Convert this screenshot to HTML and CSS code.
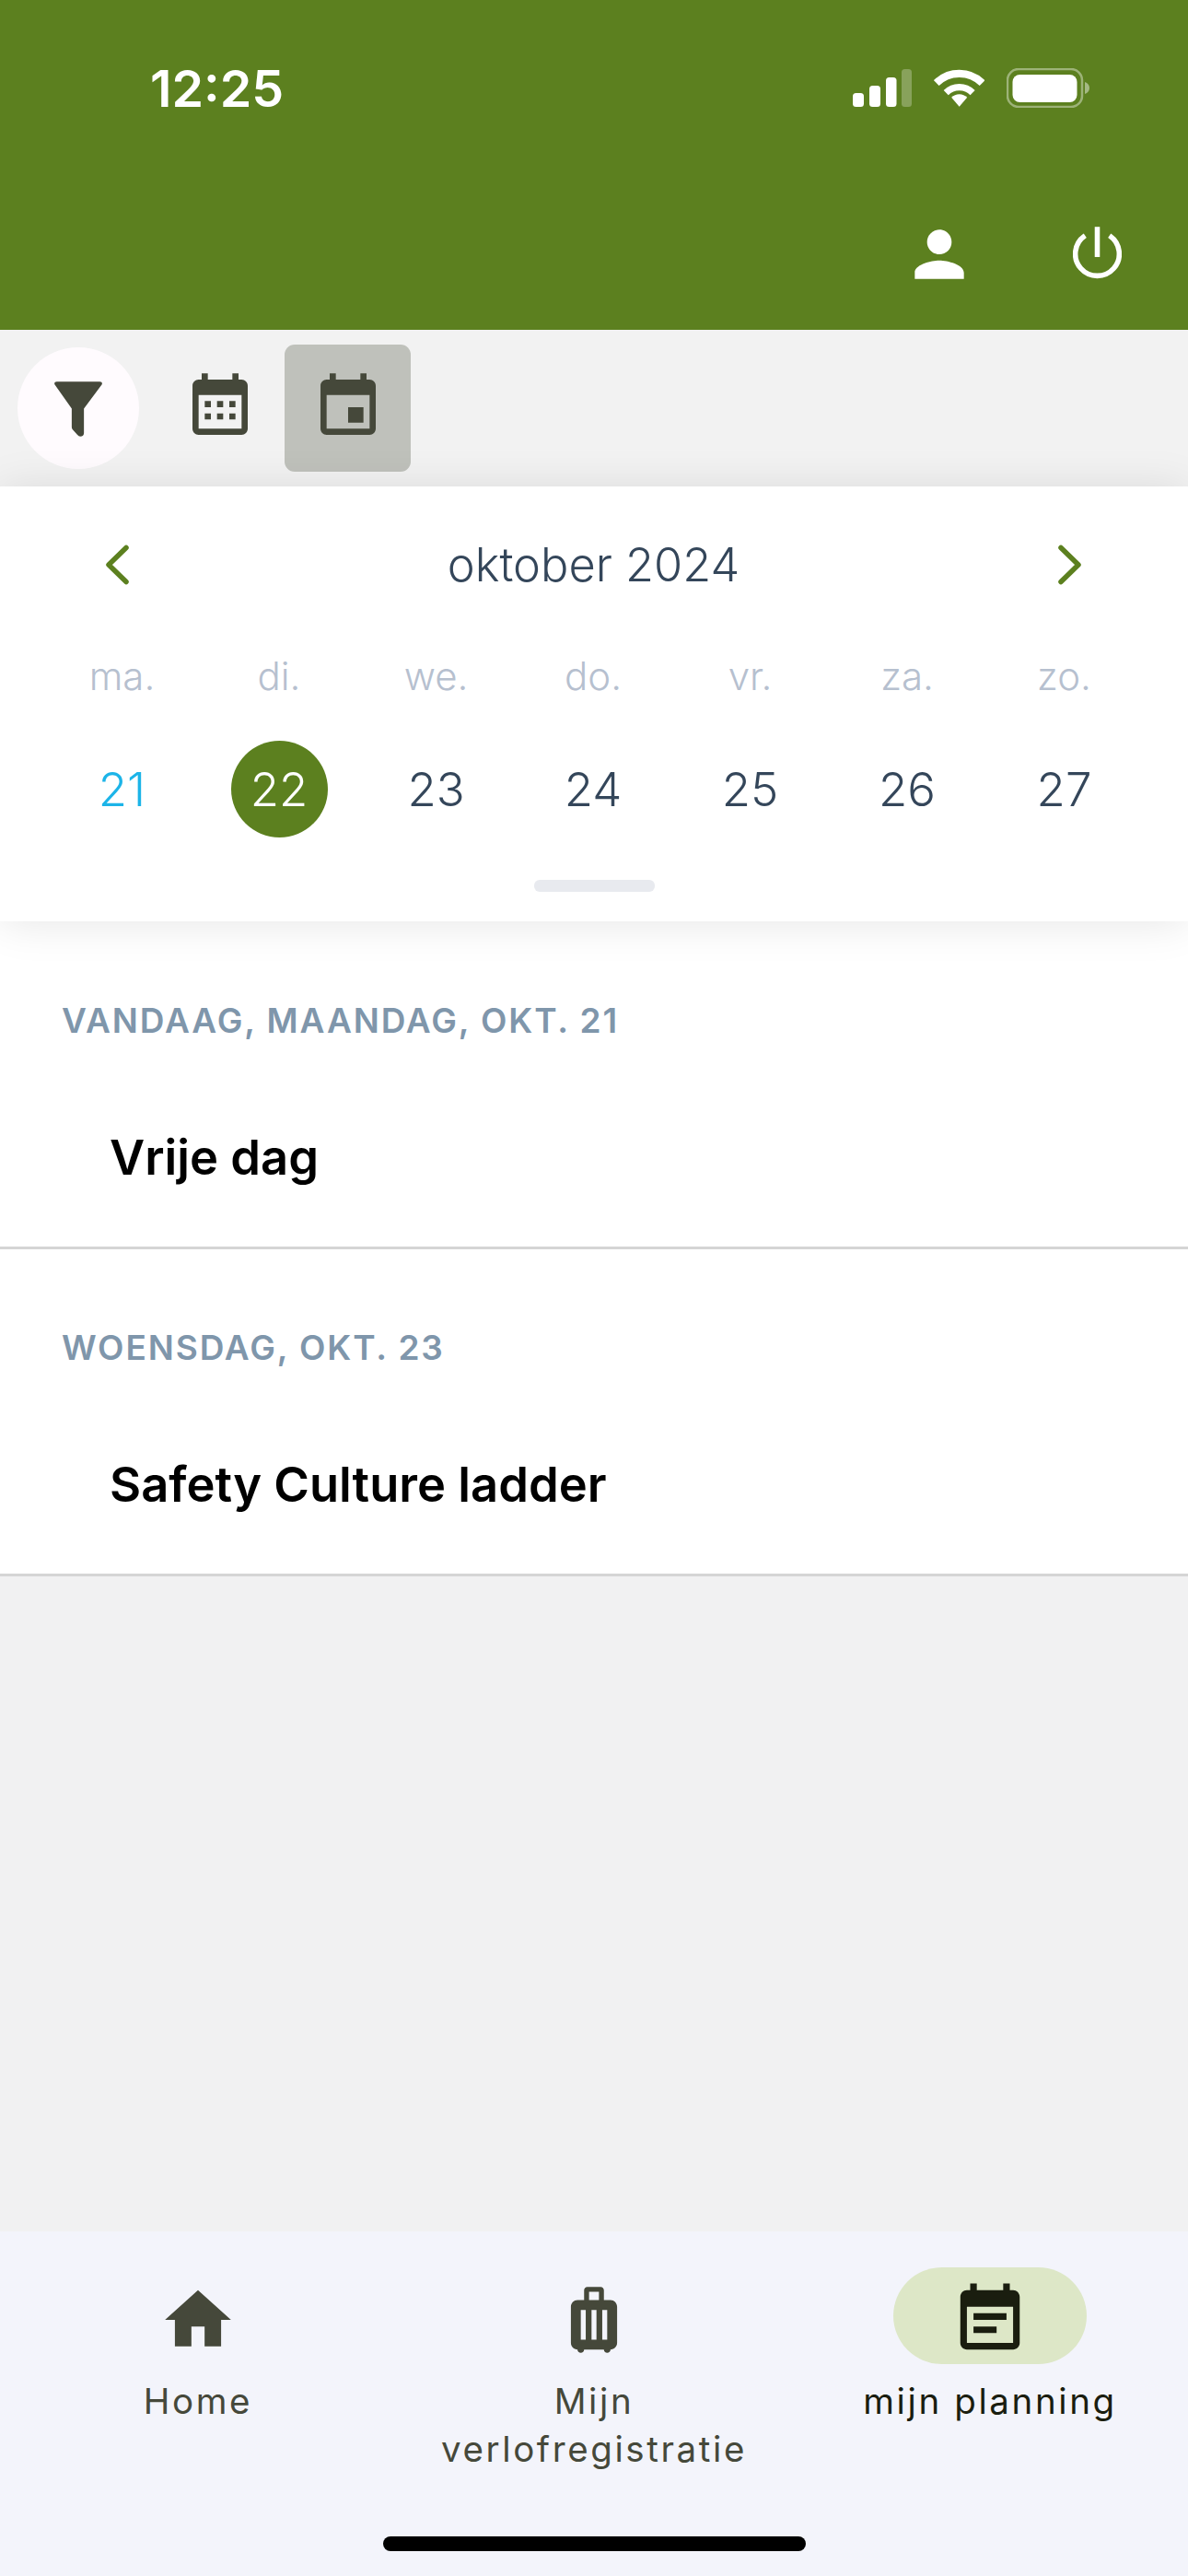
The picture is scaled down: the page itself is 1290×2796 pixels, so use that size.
FILE: index.html
```html
<!DOCTYPE html>
<html lang="nl">
<head>
<meta charset="utf-8">
<title>Mijn planning</title>
<link rel="stylesheet" href="styles.css">
</head>
<body>
<div class="app">
  <header class="header">
    <div class="status">
      <span class="time">12:25</span>
      <div class="status-icons">
        <svg class="signal" viewBox="0 0 64 41"><rect x="0" y="26" width="12" height="15" rx="3.5" fill="#fff"/><rect x="18" y="18" width="12" height="23" rx="3.5" fill="#fff"/><rect x="36" y="9" width="11.5" height="32" rx="3.5" fill="#fff"/><rect x="53" y="0" width="11" height="41" rx="3.5" fill="#fff" fill-opacity=".27"/></svg>
        <svg class="wifi" viewBox="0 0 165 125"><path d="M7 46A108 108 0 0 1 159 46" fill="none" stroke="#fff" stroke-width="25"/><path d="M39 78A62 62 0 0 1 127 78" fill="none" stroke="#fff" stroke-width="22"/><path d="M83 124L57 94A36 36 0 0 1 109 94Z" fill="#fff"/></svg>
        <svg class="battery" viewBox="0 0 90 43"><rect x="1" y="1" width="81" height="41" rx="12" fill="none" stroke="#fff" stroke-opacity=".4" stroke-width="2.5"/><rect x="6.500" y="7" width="70" height="30" rx="8" fill="#fff"/><path d="M85 15c3 1 5 3.500 5 6.500s-2 5.500-5 6.500z" fill="#fff" fill-opacity=".45"/></svg>
      </div>
    </div>
    <div class="actions">
      <svg class="icon-person" viewBox="0 0 24 24"><path fill="#fff" d="M12 12c2.210 0 4-1.790 4-4s-1.790-4-4-4-4 1.790-4 4 1.790 4 4 4zm0 2c-2.670 0-8 1.340-8 4v2h16v-2c0-2.660-5.330-4-8-4z"/></svg>
      <svg class="icon-power" viewBox="0 0 53.400 57"><path d="M13.400 9.600A24 24 0 1 0 40 9.600" fill="none" stroke="#fff" stroke-width="5.600"/><rect x="23.900" y="0" width="5.600" height="33" fill="#fff"/></svg>
    </div>
  </header>

  <div class="toolbar">
    <div class="filter">
      <svg class="icon-filter" viewBox="0 0 157 179"><path class="ink" d="M8 0H149Q159 0 156 9L97 88V168Q97 179 85 179Q80 179 75 173L60 157Q57 153 57 148V88L1 9Q-2 0 8 0Z"/></svg>
    </div>
    <div class="view">
      <svg class="icon-tool" viewBox="0 0 24 24"><path class="ink" d="M16 1v2H8V1H6v2H5c-1.110 0-1.990.9-1.990 2L3 19c0 1.100.89 2 2 2h14c1.100 0 2-.9 2-2V5c0-1.100-.9-2-2-2h-1V1h-2zm3 18H5V8h14v11zM7 10h2v2H7zm4 0h2v2h-2zm4 0h2v2h-2zM7 14h2v2H7zm4 0h2v2h-2zm4 0h2v2h-2z"/></svg>
    </div>
    <div class="view view-active">
      <svg class="icon-tool" viewBox="0 0 24 24"><path class="ink" d="M17 12h-5v5h5v-5zM16 1v2H8V1H6v2H5c-1.110 0-1.990.9-1.990 2L3 19c0 1.100.89 2 2 2h14c1.100 0 2-.9 2-2V5c0-1.100-.9-2-2-2h-1V1h-2zm3 18H5V8h14v11z"/></svg>
    </div>
  </div>

  <section class="calendar">
    <div class="cal-head">
      <svg class="chevron" viewBox="0 0 28 44"><path d="M24 3.500L5 22l19 18.500"/></svg>
      <span class="month">oktober 2024</span>
      <svg class="chevron" viewBox="0 0 28 44"><path d="M4 3.500L23 22 4 40.500"/></svg>
    </div>
    <div class="week">
      <span>ma.</span><span>di.</span><span>we.</span><span>do.</span><span>vr.</span><span>za.</span><span>zo.</span>
    </div>
    <div class="days">
      <span class="day day-today">21</span>
      <span class="day day-selected">22</span>
      <span class="day">23</span>
      <span class="day">24</span>
      <span class="day">25</span>
      <span class="day">26</span>
      <span class="day">27</span>
    </div>
    <div class="handle"></div>
  </section>

  <main class="list">
    <article class="entry entry-first">
      <h2 class="entry-date">VANDAAG, MAANDAG, OKT. 21</h2>
      <p class="entry-title">Vrije dag</p>
    </article>
    <article class="entry">
      <h2 class="entry-date">WOENSDAG, OKT. 23</h2>
      <p class="entry-title">Safety Culture ladder</p>
    </article>
  </main>

  <nav class="nav">
    <div class="nav-item">
      <div class="nav-pill">
        <svg class="nav-icon nav-icon-low" viewBox="0 0 24 24"><path d="M10 20v-6h4v6h5v-8h3L12 3 2 12h3v8z"/></svg>
      </div>
      <span class="nav-label">Home</span>
    </div>
    <div class="nav-item">
      <div class="nav-pill">
        <svg class="nav-icon nav-icon-low" viewBox="0 0 24 24"><path d="M17 6h-2V3c0-.55-.45-1-1-1h-4c-.55 0-1 .45-1 1v3H7c-1.100 0-2 .9-2 2v11c0 1.100.9 2 2 2 0 .55.45 1 1 1s1-.45 1-1h6c0 .55.45 1 1 1s1-.45 1-1c1.100 0 2-.9 2-2V8c0-1.100-.9-2-2-2zM9.500 18H8V9h1.500v9zm3.250 0h-1.500V9h1.500v9zm3.250 0h-1.500V9H16v9zM13.500 6h-3V3.500h3V6z"/></svg>
      </div>
      <span class="nav-label">Mijn<br>verlofregistratie</span>
    </div>
    <div class="nav-item nav-item-active">
      <div class="nav-pill">
        <svg class="nav-icon nav-icon-low" viewBox="0 0 24 24"><path d="M17 10H7v2h10v-2zm2-7h-1V1h-2v2H8V1H6v2H5c-1.110 0-1.990.9-1.990 2L3 19c0 1.100.89 2 2 2h14c1.100 0 2-.9 2-2V5c0-1.100-.9-2-2-2zm0 16H5V8h14v11zm-5-5H7v2h7v-2z"/></svg>
      </div>
      <span class="nav-label">mijn planning</span>
    </div>
    <div class="home-bar"></div>
  </nav>
</div>
</body>
</html>
```
FILE: styles.css
```css
* { box-sizing: border-box; }
html, body { margin: 0; padding: 0; }
body { font-family: Inter, "Liberation Sans", sans-serif; background: #f1f1f2; }
.app { width: 1290px; height: 2796px; display: flex; flex-direction: column; overflow: hidden; }

.header { height: 358px; background: #5c801f; display: flex; flex-direction: column; flex: none; }
.status { display: flex; justify-content: space-between; align-items: center; height: 43px; margin-top: 74px; padding: 0 107px 0 163px; }
.time { color: #fff; font-size: 55.500px; font-weight: 600; line-height: 43px; }
.status-icons { display: flex; align-items: center; gap: 24px; }
.signal { width: 64px; height: 41px; }
.wifi { width: 55px; height: 41px; }
.battery { width: 90px; height: 43px; }
.actions { display: flex; justify-content: flex-end; align-items: flex-start; padding: 119px 72px 0 0; }
.icon-person { width: 80px; height: 80px; margin-right: 105px; }
.icon-power { width: 53px; height: 57px; margin-top: 10px; }

.toolbar { height: 170px; flex: none; display: flex; align-items: flex-start; padding: 16px 0 0 19px; background: #f2f2f2; }
.ink { fill: #45483a; }
.filter { width: 132px; height: 132px; margin-top: 3px; margin-right: 19px; border-radius: 50%; background: #fffbfe; display: flex; align-items: center; justify-content: center; }
.icon-filter { width: 52px; height: 60px; margin-top: 2px; }
.view { width: 137px; height: 138px; margin-right: 2px; border-radius: 11px; display: flex; justify-content: center; padding-top: 28px; }
.view-active { background: #bfc1bb; }
.icon-tool { width: 80px; height: 80px; }

.calendar { height: 472px; flex: none; background: #fff; position: relative; z-index: 1; box-shadow: 0 2px 44px rgba(0, 0, 0, .1); display: flex; flex-direction: column; align-items: center; }
.cal-head { width: 100%; display: flex; justify-content: space-between; align-items: center; height: 44px; margin-top: 63px; padding: 0 114px 0 113px; }
.month { font-size: 50.500px; font-weight: 300; color: #34465a; line-height: 44px; }
.chevron { width: 28px; height: 44px; }
.chevron path { fill: none; stroke: #5c801f; stroke-width: 5.500px; stroke-linecap: round; stroke-linejoin: round; }
.week, .days { display: grid; grid-template-columns: repeat(7, 170.500px); width: 1193.500px; margin-right: 2px; text-align: center; }
.week { margin-top: 68px; height: 60px; align-items: center; font-size: 42px; font-weight: 300; color: #b6c0cf; }
.days { margin-top: 41px; height: 105px; align-items: center; justify-items: center; font-size: 51px; font-weight: 300; color: #34465a; }
.day { width: 105px; height: 105px; line-height: 105px; border-radius: 50%; }
.day-today { color: #1cb4e8; }
.day-selected { background: #5c801f; color: #fff; }
.handle { width: 131px; height: 13px; margin-top: 46px; border-radius: 6px; background: #e8eaef; }

.list { flex: none; background: #fff; }
.entry { height: 355px; border-bottom: 3px solid #d5d5d5; padding: 87px 0 0 67px; }
.entry-first { height: 356px; padding-top: 88px; }
.entry-date { margin: 0; font-size: 37px; font-weight: 600; letter-spacing: 1.900px; line-height: 40px; color: #7f96ab; }
.entry-title { margin: 98px 0 0 52px; font-size: 52.500px; font-weight: 600; line-height: 60px; color: #000; }

.nav { margin-top: auto; height: 374px; flex: none; background: #f3f4fb; display: grid; grid-template-columns: repeat(3, 430px); position: relative; padding-top: 39px; }
.nav-item { display: flex; flex-direction: column; align-items: center; color: #45483a; }
.nav-pill { width: 210px; height: 105px; border-radius: 53px; display: flex; align-items: center; justify-content: center; }
.nav-item-active { color: #1a1d0f; }
.nav-item-active .nav-pill { background: #dde7c7; }
.nav-icon { width: 86px; height: 86px; fill: currentColor; }
.nav-icon-low { margin-top: 8px; }
.nav-label { margin-top: 14px; font-size: 38.500px; line-height: 52px; letter-spacing: 2.600px; text-align: center; }
.home-bar { position: absolute; left: 416px; bottom: 27px; width: 459px; height: 16px; border-radius: 8px; background: #000; }
```
